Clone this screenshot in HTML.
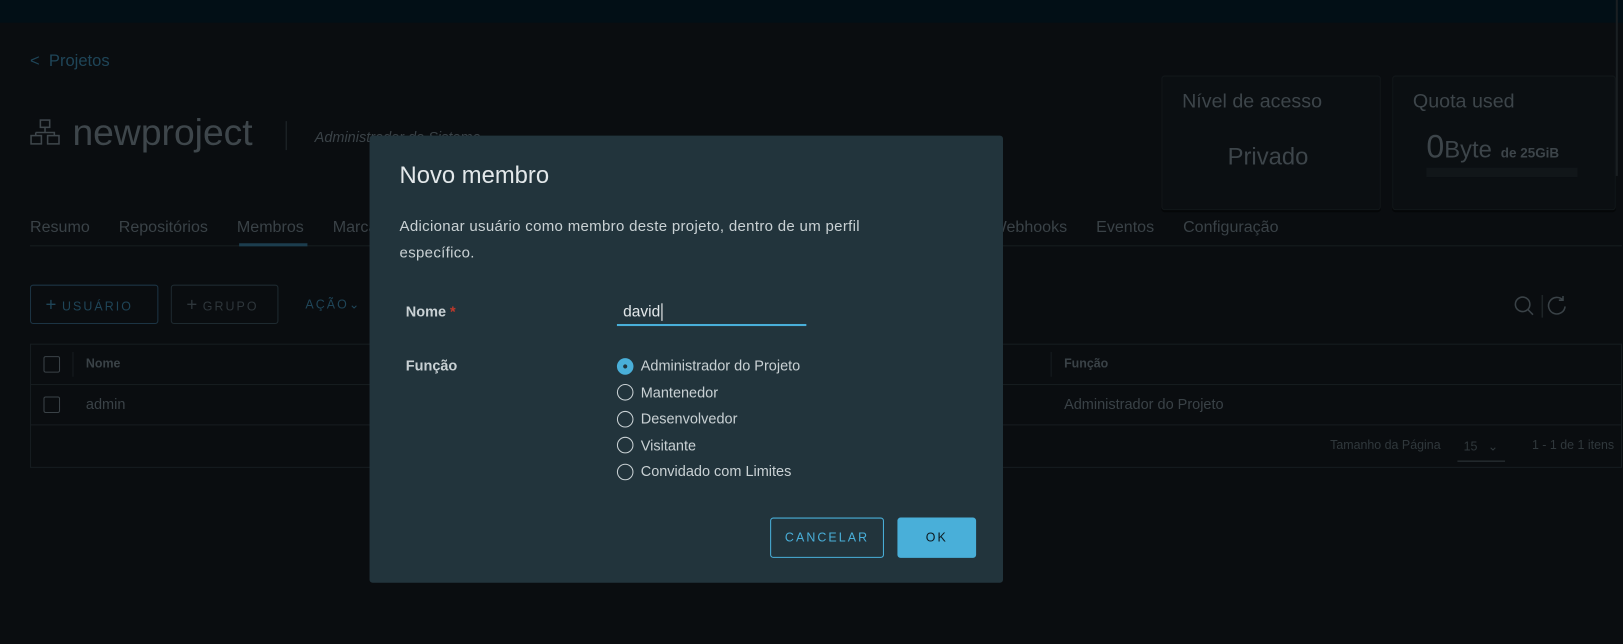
<!DOCTYPE html>
<html><head><meta charset="utf-8"><style>
*{box-sizing:border-box;margin:0;padding:0}
body{width:1623px;height:644px;overflow:hidden;background:#0a0d10;font-family:"Liberation Sans",sans-serif;position:relative;color:#4a5358}
#w{position:absolute;left:0;top:0;width:1568px;height:622px;transform:scale(1.0351);transform-origin:0 0}
.a{position:absolute;white-space:nowrap}
.top{left:0;top:0;width:1568px;height:22px;background:#020f16}
.card{background:#0b0f12;border:1px solid #12171a;box-shadow:0 2px 0 #050708;border-radius:3px}
.btn{border:1px solid #1e2a30;border-radius:3px;font-size:12px;letter-spacing:2px;height:38px;line-height:36px}
.modal{left:357px;top:131px;width:612px;height:432px;background:#22343c;border-radius:3px}
.radio{position:absolute;width:16px;height:16px;border:1.5px solid #c9d1d4;border-radius:50%}
.rl{font-size:14px;color:#c9d1d4}
</style></head><body><div id="w">
<div class="a top"></div>
<div class="a" style="left:29px;top:51px;font-size:16px;color:#1f4558">&lt;&nbsp; Projetos</div>
<svg class="a" style="left:29px;top:114px" width="30" height="28" viewBox="0 0 30 28" fill="none" stroke="#3e464b" stroke-width="1.5"><rect x="10" y="2" width="9" height="7"/><path d="M14.5 9v5M5.5 14h18v3M5.5 14v3"/><rect x="1" y="17" width="10" height="8"/><rect x="17" y="17" width="11" height="8"/></svg>
<div class="a" style="left:70px;top:107px;font-size:36px;color:#3e464b">newproject</div>
<div class="a" style="left:276px;top:117px;width:1px;height:28px;background:#22292d"></div>
<div class="a" style="left:304px;top:124px;font-size:14px;font-style:italic;color:#3a4247">Administrador do Sistema</div>
<div class="a card" style="left:1122px;top:73px;width:212px;height:130px"></div>
<div class="a" style="left:1142px;top:88px;font-size:19px;color:#3d454a">Nível de acesso</div>
<div class="a" style="left:1186px;top:138px;font-size:23px;color:#3d454a">Privado</div>
<div class="a card" style="left:1345px;top:73px;width:216px;height:130px"></div>
<div class="a" style="left:1365px;top:88px;font-size:19px;color:#3d454a">Quota used</div>
<div class="a" style="left:1378px;top:124px;font-size:31px;color:#3d454a">0<span style="font-size:23px">Byte</span> <span style="font-size:13px;font-weight:bold">de 25GiB</span></div>
<div class="a" style="left:1378px;top:162px;width:146px;height:9px;background:#111619"></div>
<div class="a" style="left:1561px;top:0;width:2px;height:170px;background:#1a1f22"></div>
<div class="a" style="left:29px;top:211px;font-size:15.5px;color:#3a4247">Resumo<span style="margin-left:28px">Repositórios</span><span style="margin-left:28px">Membros</span><span style="margin-left:28px">Marcadores</span></div>
<div class="a" style="left:958px;top:211px;font-size:15.5px;color:#3a4247">Webhooks<span style="margin-left:28px">Eventos</span><span style="margin-left:28px">Configuração</span></div>
<div class="a" style="left:29px;top:237px;width:1538px;height:1px;background:#171d20"></div>
<div class="a" style="left:231px;top:235px;width:66px;height:3px;background:#1c3d4e"></div>
<div class="a btn" style="left:29px;top:275px;width:124px;color:#1f4558;border-color:#1c3444;padding-left:14px"><span style="font-size:18px;letter-spacing:0">+</span> USUÁRIO</div>
<div class="a btn" style="left:165px;top:275px;width:104px;color:#2e363b;padding-left:14px"><span style="font-size:18px;letter-spacing:0">+</span> GRUPO</div>
<div class="a" style="left:295px;top:287px;font-size:12px;letter-spacing:2px;color:#1f4558">AÇÃO⌄</div>
<svg class="a" style="left:1462px;top:285px" width="52" height="22" fill="none" stroke="#3a4247" stroke-width="1.5"><circle cx="9" cy="9" r="7"/><path d="M14 14l5 5"/><path d="M28 0v22" stroke="#1e2427"/><path d="M48 5a8 8 0 1 0 2 6M48 1v4h-4"/></svg>
<div class="a" style="left:29px;top:332px;width:1538px;height:120px;border:1px solid #171d20"></div>
<div class="a" style="left:29px;top:371px;width:1538px;height:1px;background:#171d20"></div>
<div class="a" style="left:29px;top:410px;width:1538px;height:1px;background:#171d20"></div>
<div class="a" style="left:42px;top:344px;width:16px;height:16px;border:1.5px solid #3a4247;border-radius:2px"></div>
<div class="a" style="left:42px;top:383px;width:16px;height:16px;border:1.5px solid #3a4247;border-radius:2px"></div>
<div class="a" style="left:70px;top:340px;width:1px;height:24px;background:#171d20"></div>
<div class="a" style="left:83px;top:344px;font-size:12px;font-weight:bold;color:#3a4247">Nome</div>
<div class="a" style="left:83px;top:382px;font-size:14px;color:#3a4247">admin</div>
<div class="a" style="left:1015px;top:340px;width:1px;height:24px;background:#171d20"></div>
<div class="a" style="left:1028px;top:344px;font-size:12px;font-weight:bold;color:#3a4247">Função</div>
<div class="a" style="left:1028px;top:382px;font-size:14px;color:#3a4247">Administrador do Projeto</div>
<div class="a" style="left:1285px;top:423px;font-size:12px;color:#30383c">Tamanho da Página</div>
<div class="a" style="left:1414px;top:424px;font-size:12px;color:#30383c">15 &nbsp;&nbsp;⌄</div>
<div class="a" style="left:1408px;top:445px;width:46px;height:1px;background:#30383c"></div>
<div class="a" style="left:1480px;top:423px;font-size:12px;color:#30383c">1 - 1 de 1 itens</div>

<div class="a modal"></div>
<div class="a" style="left:386px;top:156px;font-size:23px;color:#e3e8ea">Novo membro</div>
<div class="a" style="left:386px;top:206px;font-size:14.5px;line-height:26px;color:#c9d1d4;letter-spacing:0.3px">Adicionar usuário como membro deste projeto, dentro de um perfil<br>específico.</div>
<div class="a" style="left:392px;top:293px;font-size:14px;font-weight:bold;color:#c9d1d4">Nome <span style="color:#c0392b">*</span></div>
<div class="a" style="left:602px;top:293px;font-size:15px;color:#e3e8ea">david<span style="border-left:1px solid #fff;margin-left:1px"></span></div>
<div class="a" style="left:596px;top:313px;width:183px;height:2px;background:#49afd9"></div>
<div class="a" style="left:392px;top:345px;font-size:14px;font-weight:bold;color:#c9d1d4">Função</div>
<div class="a" style="left:596px;top:346px;width:16px;height:16px;border-radius:50%;background:#49afd9"><div style="position:absolute;left:6px;top:6px;width:4px;height:4px;border-radius:50%;background:#22343c"></div></div>
<div class="radio" style="left:596px;top:371px"></div>
<div class="radio" style="left:596px;top:397px"></div>
<div class="radio" style="left:596px;top:422px"></div>
<div class="radio" style="left:596px;top:448px"></div>
<div class="a rl" style="left:619px;top:345px">Administrador do Projeto</div>
<div class="a rl" style="left:619px;top:371px">Mantenedor</div>
<div class="a rl" style="left:619px;top:396px">Desenvolvedor</div>
<div class="a rl" style="left:619px;top:422px">Visitante</div>
<div class="a rl" style="left:619px;top:447px">Convidado com Limites</div>
<div class="a" style="left:744px;top:500px;width:110px;height:39px;border:1px solid #49afd9;border-radius:3px;color:#49afd9;font-size:12px;letter-spacing:2px;text-align:center;line-height:37px">CANCELAR</div>
<div class="a" style="left:867px;top:500px;width:76px;height:39px;background:#49afd9;border-radius:3px;color:#0d1a20;font-size:12px;letter-spacing:2px;text-align:center;line-height:39px">OK</div>
</div></body></html>
